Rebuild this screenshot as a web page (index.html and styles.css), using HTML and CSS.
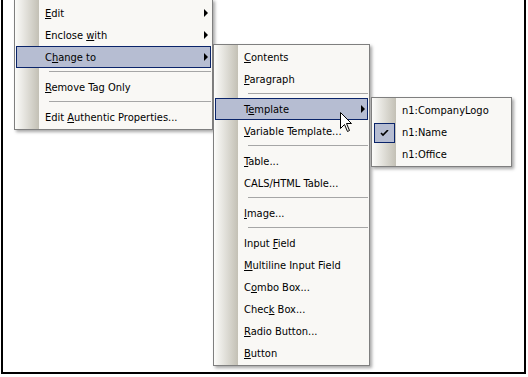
FILE: index.html
```html
<!DOCTYPE html>
<html lang="en">
  <head>
    <meta charset="UTF-8" />
    <meta name="viewport" content="width=device-width, initial-scale=1.0" />
    <title>Change to menu</title>
    <link rel="stylesheet" href="styles.css">
  </head>
  <body>
    <div class="frame">
      <div class="menu menu-main">
        <div class="item"><span class="gutter"></span><span class="label"><u>E</u>dit</span><span class="arrow"></span></div>
        <div class="item"><span class="gutter"></span><span class="label">Enclose <u>w</u>ith</span><span class="arrow"></span></div>
        <div class="item active"><span class="gutter"></span><span class="label">C<u>h</u>ange to</span><span class="arrow"></span></div>
        <div class="sep"></div>
        <div class="item"><span class="gutter"></span><span class="label"><u>R</u>emove Tag Only</span></div>
        <div class="sep"></div>
        <div class="item"><span class="gutter"></span><span class="label">Edit <u>A</u>uthentic Properties...</span></div>
      </div>

      <div class="menu menu-change">
        <div class="item"><span class="gutter"></span><span class="label"><u>C</u>ontents</span></div>
        <div class="item"><span class="gutter"></span><span class="label"><u>P</u>aragraph</span></div>
        <div class="sep"></div>
        <div class="item active"><span class="gutter"></span><span class="label">T<u>e</u>mplate</span><span class="arrow"></span></div>
        <div class="item"><span class="gutter"></span><span class="label"><u>V</u>ariable Template...</span></div>
        <div class="sep"></div>
        <div class="item"><span class="gutter"></span><span class="label"><u>T</u>able...</span></div>
        <div class="item"><span class="gutter"></span><span class="label">CALS/HTML Table...</span></div>
        <div class="sep"></div>
        <div class="item"><span class="gutter"></span><span class="label"><u>I</u>mage...</span></div>
        <div class="sep"></div>
        <div class="item"><span class="gutter"></span><span class="label">Input <u>F</u>ield</span></div>
        <div class="item"><span class="gutter"></span><span class="label"><u>M</u>ultiline Input Field</span></div>
        <div class="item"><span class="gutter"></span><span class="label">C<u>o</u>mbo Box...</span></div>
        <div class="item"><span class="gutter"></span><span class="label">Chec<u>k</u> Box...</span></div>
        <div class="item"><span class="gutter"></span><span class="label"><u>R</u>adio Button...</span></div>
        <div class="item"><span class="gutter"></span><span class="label"><u>B</u>utton</span></div>
      </div>

      <div class="menu menu-template">
        <div class="item"><span class="gutter"></span><span class="label">n1:CompanyLogo</span></div>
        <div class="item"><span class="gutter"><span class="check"><svg width="9" height="7" viewBox="0 0 9 7"><path d="M1 3 L3 5 L8 0" fill="none" stroke="#000" stroke-width="1.6"/></svg></span></span><span class="label">n1:Name</span></div>
        <div class="item"><span class="gutter"></span><span class="label">n1:Office</span></div>
      </div>

      <svg class="cursor" width="13" height="21" viewBox="0 0 13 21">
        <path d="M0.5 0.5 L0.5 16.5 L4.5 12.5 L7.5 19.5 L9.5 18.5 L6.5 11.5 L11.5 11.5 Z" fill="#fff" stroke="#000" stroke-width="1"/>
      </svg>
    </div>
  </body>
</html>
```

FILE: styles.css
```css
body {
  margin: 0;
  background: #fff;
}

.frame {
  position: relative;
  box-sizing: border-box;
  width: 525px;
  height: 376px;
  margin: -2px 0 0 1px;
  border: 2px solid #000;
  border-top: none;
  background: #fff;
  overflow: hidden;
}

.menu {
  position: absolute;
  box-sizing: border-box;
  display: flex;
  flex-direction: column;
  padding: 1px;
  border: 1px solid #7f7f7f;
  background: linear-gradient(to right, #fcfcfa 0, #c3c0b5 24px, #f9f8f5 24px);
  box-shadow: 2px 2px 3px rgba(0, 0, 0, 0.35);
  font-family: "DejaVu Sans Condensed", "DejaVu Sans", sans-serif;
  font-size: 11px;
  color: #000;
}

/* top edge of this one sits just above the picture */
.menu-main {
  left: 11px;
  top: 1px;
  width: 199px;
  padding-top: 2px;
  z-index: 1;
}

.menu-change {
  left: 210px;
  top: 46px;
  width: 157px;
  z-index: 2;
}

.menu-template {
  left: 368px;
  top: 99px;
  width: 141px;
  z-index: 3;
}

.item {
  display: flex;
  align-items: center;
  box-sizing: border-box;
  height: 22px;
}

.item.active {
  background: #b6bdd2;
  border: 1px solid #0a246a;
}

.gutter {
  display: flex;
  align-items: center;
  width: 29px;
  height: 100%;
  flex: none;
}

.item.active .gutter {
  width: 28px;
}

.label {
  flex: 1;
  white-space: nowrap;
}

.arrow {
  width: 0;
  height: 0;
  margin-right: 3px;
  border-top: 4px solid transparent;
  border-bottom: 4px solid transparent;
  border-left: 4px solid #000;
}

.item.active .arrow {
  margin-right: 2px;
}

.check {
  display: flex;
  align-items: center;
  justify-content: center;
  box-sizing: border-box;
  width: 21px;
  height: 20px;
  margin: 2px 0 0 1px;
  border: 1px solid #0a246a;
  background: #b6bdd2;
}

.sep {
  height: 8px;
  flex: none;
  box-sizing: border-box;
  padding-top: 3px;
  margin-left: 33px;
}

.sep::before {
  content: "";
  display: block;
  height: 1px;
  background: #a6a6a6;
}

.cursor {
  position: absolute;
  left: 337px;
  top: 114px;
  z-index: 4;
}
```
